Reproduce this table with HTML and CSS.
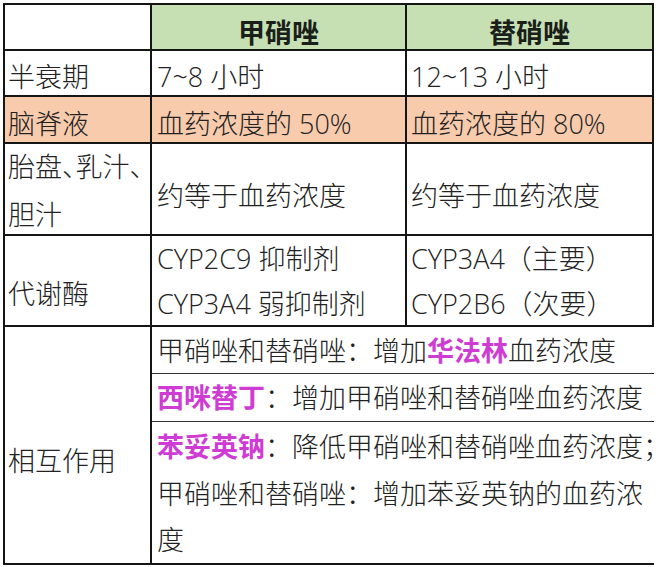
FILE: index.html
```html
<!DOCTYPE html>
<html lang="zh-CN">
<head>
<meta charset="utf-8">
<title>甲硝唑 vs 替硝唑</title>
<link rel="stylesheet" href="styles.css">
</head>
<body>
<div class="table">
  <div class="cell corner"></div>
  <div class="cell head">甲硝唑</div>
  <div class="cell head">替硝唑</div>

  <div class="cell col1 r1">半衰期</div>
  <div class="cell col2 r1">7~8 小时</div>
  <div class="cell col3 r1">12~13 小时</div>

  <div class="cell col1 r2 orange">脑脊液</div>
  <div class="cell col2 r2 orange">血药浓度的 50%</div>
  <div class="cell col3 r2 orange">血药浓度的 80%</div>

  <div class="cell col1 r3a"><span>胎盘<i class="halt">、</i>乳汁<i class="halt">、</i></span><span>胆汁</span></div>
  <div class="cell col2 r3b">约等于血药浓度</div>
  <div class="cell col3 r3b">约等于血药浓度</div>

  <div class="cell col1 r4a">代谢酶</div>
  <div class="cell col2 r4b"><span>CYP2C9 抑制剂</span><span>CYP3A4 弱抑制剂</span></div>
  <div class="cell col3 r4b"><span>CYP3A4（主要）</span><span>CYP2B6（次要）</span></div>

  <div class="cell col1 r5">相互作用</div>
  <div class="sub">
    <div class="cell subcell s1"><span>甲硝唑和替硝唑：增加<b class="mag">华法林</b>血药浓度</span></div>
    <div class="cell subcell s2"><span><b class="mag">西咪替丁</b>：增加甲硝唑和替硝唑血药浓度</span></div>
    <div class="cell subcell s3"><span><b class="mag">苯妥英钠</b>：降低甲硝唑和替硝唑血药浓度<i class="halt">；</i></span><span>甲硝唑和替硝唑：增加苯妥英钠的血药浓</span><span>度</span></div>
  </div>
</div>
</body>
</html>
```

FILE: styles.css
```css
html, body {
  margin: 0;
  padding: 0;
  background: #ffffff;
}

body {
  font-family: "Open Sans", "Noto Sans CJK SC", sans-serif;
  font-size: 27px;
  font-weight: 300;
  color: #222222;
}

.table {
  margin: 3px 0 0 3px;
  width: 651px;
  box-sizing: border-box;
  display: grid;
  grid-template-columns: 145px 253px 245px;
  grid-template-rows: 44px 44px 45px 90px 89px 236px;
  gap: 2px;
  padding: 2px;
  background: #151515;
}

.cell {
  background: #ffffff;
  display: flex;
  flex-direction: column;
  justify-content: center;
  line-height: 47px;
  box-sizing: border-box;
  padding-left: 4px;
  overflow: visible;
  white-space: nowrap;
}

.cell span {
  display: block;
}

.halt {
  font-style: normal;
  font-feature-settings: "halt" 1;
}

.head {
  background: #c6e0b4;
  font-weight: bold;
  color: #1b1f1a;
  align-items: center;
  padding-left: 0;
  padding-top: 10px;
}

.corner {
  background: #ffffff;
}

.col1 { padding-left: 3px; }
.col2 { padding-left: 5px; }
.col3 { padding-left: 4px; }

.orange { background: #f8cbad; }

.r1 { padding-top: 7px; }
.r2 { padding-top: 7px; }
.r3a { padding-top: 3px; line-height: 48px; }
.r3b { padding-top: 12px; }
.r4a { padding-top: 25px; }
.r4b { padding-top: 0; line-height: 45px; }
.r5 { padding-top: 30px; }

.sub {
  grid-column: 2 / span 2;
  display: grid;
  grid-template-rows: 46px 47px 141px;
  gap: 1px;
  background: #333333;
}

.subcell { padding-left: 5px; }
.s1 { padding-top: 1px; }
.s2 { padding-top: 0; }
.s3 { padding-top: 3px; line-height: 46.5px; }

.mag {
  color: #cf3cd4;
  font-weight: bold;
}
```
